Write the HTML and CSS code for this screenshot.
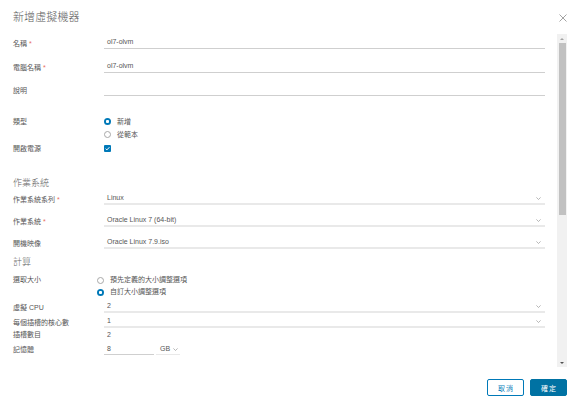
FILE: index.html
```html
<!DOCTYPE html>
<html lang="zh-Hant">
<head>
<meta charset="utf-8">
<title>新增虛擬機器</title>
<link rel="stylesheet" href="styles.css">
</head>
<body>
<div class="modal">
  <div class="header">
    <h1 class="title">新增虛擬機器</h1>
    <svg class="close" width="8" height="8" viewBox="0 0 8 8"><path d="M0.5 0.5L7.5 7.5M7.5 0.5L0.5 7.5" stroke="#8c8c8c" stroke-width="0.8" fill="none"/></svg>
  </div>
  <div class="body">
    <div class="content">
      <div class="row r-name">
        <div class="label">名稱 <span class="req">*</span></div>
        <div class="input">ol7-olvm</div>
      </div>
      <div class="row r-host">
        <div class="label">電腦名稱 <span class="req">*</span></div>
        <div class="input">ol7-olvm</div>
      </div>
      <div class="row r-desc">
        <div class="label">說明</div>
        <div class="input"></div>
      </div>
      <div class="row row-top r-type">
        <div class="label lh13">類型</div>
        <div class="radios">
          <div class="radio lh13"><span class="dot on"></span>新增</div>
          <div class="radio lh13"><span class="dot"></span>從範本</div>
        </div>
      </div>
      <div class="row r-power">
        <div class="label lh13">開啟電源</div>
        <div class="checkline"><span class="check"><svg width="7" height="7" viewBox="0 0 7 7"><path d="M1.6 3.7L2.9 4.9L5.4 2.2" stroke="#fff" stroke-width="1" fill="none"/></svg></span></div>
      </div>

      <h2 class="section s-os">作業系統</h2>
      <div class="row r-osfam">
        <div class="label">作業系統系列 <span class="req">*</span></div>
        <div class="select"><span>Linux</span><svg class="chev" width="5" height="3" viewBox="0 0 5 3"><path d="M0.4 0.4L2.5 2.5L4.6 0.4" stroke="#9a9a9a" stroke-width="0.7" fill="none"/></svg></div>
      </div>
      <div class="row r-os">
        <div class="label">作業系統 <span class="req">*</span></div>
        <div class="select"><span>Oracle Linux 7 (64-bit)</span><svg class="chev" width="5" height="3" viewBox="0 0 5 3"><path d="M0.4 0.4L2.5 2.5L4.6 0.4" stroke="#9a9a9a" stroke-width="0.7" fill="none"/></svg></div>
      </div>
      <div class="row r-boot">
        <div class="label">開機映像</div>
        <div class="select"><span>Oracle Linux 7.9.iso</span><svg class="chev" width="5" height="3" viewBox="0 0 5 3"><path d="M0.4 0.4L2.5 2.5L4.6 0.4" stroke="#9a9a9a" stroke-width="0.7" fill="none"/></svg></div>
      </div>

      <h2 class="section s-comp">計算</h2>
      <div class="row row-top r-size">
        <div class="label lh12">選取大小</div>
        <div class="radios shift">
          <div class="radio lh12"><span class="dot"></span>預先定義的大小調整選項</div>
          <div class="radio lh12"><span class="dot on"></span>自訂大小調整選項</div>
        </div>
      </div>
      <div class="row r-cpu">
        <div class="label">虛擬 CPU</div>
        <div class="select"><span>2</span><svg class="chev" width="5" height="3" viewBox="0 0 5 3"><path d="M0.4 0.4L2.5 2.5L4.6 0.4" stroke="#9a9a9a" stroke-width="0.7" fill="none"/></svg></div>
      </div>
      <div class="row r-cores">
        <div class="label">每個插槽的核心數</div>
        <div class="select"><span>1</span><svg class="chev" width="5" height="3" viewBox="0 0 5 3"><path d="M0.4 0.4L2.5 2.5L4.6 0.4" stroke="#9a9a9a" stroke-width="0.7" fill="none"/></svg></div>
      </div>
      <div class="row r-sockets">
        <div class="label lh11">插槽數目</div>
        <div class="plain lh11">2</div>
      </div>
      <div class="row r-mem">
        <div class="label">記憶體</div>
        <div class="memline">
          <div class="input mem">8</div>
          <div class="select unit"><span>GB</span><svg class="chev" width="5" height="3" viewBox="0 0 5 3"><path d="M0.4 0.4L2.5 2.5L4.6 0.4" stroke="#9a9a9a" stroke-width="0.7" fill="none"/></svg></div>
        </div>
      </div>
    </div>
    <div class="scrollbar">
      <div class="sb-btn"><span class="arrow-up"></span></div>
      <div class="sb-thumb"></div>
      <div class="sb-fill"></div>
      <div class="sb-btn"><span class="arrow-down"></span></div>
    </div>
  </div>
  <div class="footer">
    <button class="btn btn-outline">取消</button>
    <button class="btn btn-primary">確定</button>
  </div>
</div>
</body>
</html>
```

FILE: styles.css
```css
* { box-sizing: border-box; }
html, body { margin: 0; padding: 0; background: #fff; }
body {
  font-family: "Liberation Sans", "Noto Sans CJK TC", sans-serif;
  color: #3c3c3c;
}
.modal {
  width: 578px;
  height: 408px;
  display: flex;
  flex-direction: column;
  background: #fff;
}
.header {
  height: 34px;
  flex: none;
  display: flex;
  align-items: center;
  justify-content: space-between;
  padding: 0 11px 0 13px;
}
.title {
  margin: 0;
  font-size: 11px;
  font-weight: 300;
  color: #5a5a5a;
  line-height: 34px;
  letter-spacing: 0.1px;
}
.close { display: block; margin-top: 1px; }
.body {
  height: 333px;
  flex: none;
  display: flex;
}
.content {
  flex: 1;
  overflow: hidden;
  padding: 0 12px 0 13px;
}
.row {
  display: grid;
  grid-template-columns: 91px 1fr;
  align-items: center;
  font-size: 7px;
}
.row-top { align-items: start; }
.label {
  font-size: 7px;
  color: #565656;
  white-space: nowrap;
}
.lh11 { line-height: 11px; }
.lh12 { line-height: 12px; }
.lh13 { line-height: 13px; }
.req { color: #e8705f; }
.input {
  height: 13px;
  line-height: 12px;
  border-bottom: 1px solid #cfcfcf;
  padding-left: 3px;
  color: #565656;
  font-size: 7px;
}
.select {
  height: 13px;
  line-height: 11px;
  border-bottom: 2px solid #e9e9e9;
  padding: 0 4px 0 3px;
  display: flex;
  align-items: center;
  justify-content: space-between;
  color: #565656;
  font-size: 7px;
}
.chev { display: block; margin-top: 1px; flex: none; }
.plain { padding-left: 3px; color: #565656; }
.radios { display: flex; flex-direction: column; }
.radios.shift { margin-left: -7px; }
.radio {
  display: flex;
  align-items: center;
  gap: 6px;
  color: #565656;
  font-size: 7px;
}
.dot {
  width: 7px;
  height: 7px;
  border-radius: 50%;
  border: 0.8px solid #a8a8a8;
  background: #fff;
  flex: none;
}
.dot.on {
  border: none;
  background: radial-gradient(circle, #fff 0 1.3px, #0079b8 1.8px);
}
.checkline { height: 13px; display: flex; align-items: center; }
.check {
  width: 7px;
  height: 7px;
  border-radius: 1px;
  background: #0079b8;
  display: block;
}
.check svg { display: block; }
.section {
  margin: 0;
  font-size: 9px;
  font-weight: 300;
  color: #666;
  line-height: 13px;
}
.memline { display: flex; gap: 2px; }
.input.mem { width: 50px; height: 12px; line-height: 11px; }
.select.unit {
  width: 24px;
  height: 12px;
  border-bottom-width: 1px;
  padding: 0 0 0 4px;
  justify-content: flex-start;
  gap: 3px;
}

/* vertical rhythm */
.r-name { margin-top: 2px; }
.r-host { margin-top: 11px; }
.r-desc { margin-top: 10px; }
.r-type { margin-top: 19px; }
.r-power { margin-top: 1px; }
.s-os { margin-top: 22px; }
.r-osfam { margin-top: 2px; }
.r-os { margin-top: 9px; }
.r-boot { margin-top: 9px; }
.s-comp { margin-top: 7px; }
.r-size { margin-top: 5px; }
.r-cpu { margin-top: 2px; }
.r-cores { margin-top: 2px; }
.r-sockets { margin-top: 1px; }
.r-mem { margin-top: 3px; }

/* scrollbar */
.scrollbar {
  width: 10px;
  margin-right: 11px;
  background: #f1f1f1;
  display: flex;
  flex-direction: column;
  flex: none;
}
.sb-btn {
  height: 9px;
  display: flex;
  align-items: center;
  justify-content: center;
  flex: none;
}
.arrow-up {
  width: 0; height: 0;
  border-left: 2px solid transparent;
  border-right: 2px solid transparent;
  border-bottom: 2px solid #a3a3a3;
}
.arrow-down {
  width: 0; height: 0;
  border-left: 2px solid transparent;
  border-right: 2px solid transparent;
  border-top: 2px solid #505050;
}
.sb-thumb {
  height: 172px;
  margin: 0 1px 0 2px;
  background: #c1c1c1;
  flex: none;
}
.sb-fill { flex: 1; }

/* footer */
.footer {
  flex: 1;
  display: flex;
  justify-content: flex-end;
  align-items: flex-start;
  gap: 6px;
  padding: 12px 11px 0 0;
}
.btn {
  width: 37px;
  height: 17px;
  border-radius: 2px;
  font-family: "Liberation Sans", "Noto Sans CJK TC", sans-serif;
  font-size: 7px;
  letter-spacing: 1px;
  padding: 0 0 0 1px;
  cursor: pointer;
}
.btn-outline {
  background: #fff;
  border: 1px solid #0079b8;
  color: #0079b8;
}
.btn-primary {
  background: #0072a3;
  border: 1px solid #0072a3;
  color: #fff;
}
```
